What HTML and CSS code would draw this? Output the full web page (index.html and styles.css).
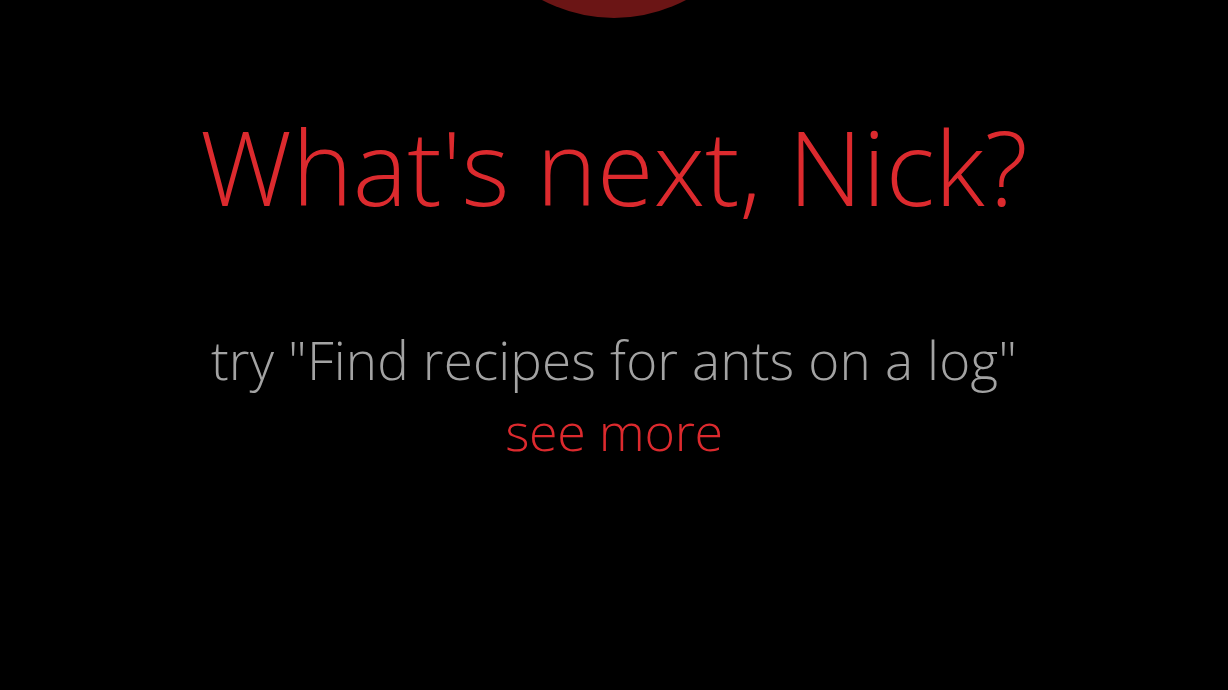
FILE: index.html
```html
<!DOCTYPE html>
<html lang="en">
<head>
<meta charset="utf-8">
<title>Cortana</title>
<link rel="stylesheet" href="styles.css">
</head>
<body>
<main class="screen">
  <div class="orb"></div>
  <h1 class="greeting">What's next, Nick?</h1>
  <div class="hints">
    <p class="hint">try "Find recipes for ants on a log"</p>
    <p class="more">see more</p>
  </div>
</main>
</body>
</html>
```
FILE: styles.css
```css
html, body {
  margin: 0;
  padding: 0;
  background: #000;
  height: 100%;
  overflow: hidden;
}
.screen {
  display: flex;
  flex-direction: column;
  align-items: center;
  font-family: "Open Sans", "Noto Sans", sans-serif;
  font-weight: 300;
}
.orb {
  width: 306px;
  height: 306px;
  border-radius: 50%;
  background: #6b1515;
  margin-top: -288px;
  flex: none;
}
.greeting {
  margin: 87px 0 0;
  font-size: 103px;
  line-height: 1.2;
  font-weight: 300;
  color: #dc2a2e;
  white-space: nowrap;
}
.hints {
  margin-top: 95px;
  display: flex;
  flex-direction: column;
  align-items: center;
  font-size: 53px;
  line-height: 71px;
  font-weight: 350;
}
.hint, .more {
  margin: 0;
  white-space: nowrap;
}
.hint { color: #a3a3a3; letter-spacing: 0.15px; }
.more { color: #dc2a2e; font-size: 52px; letter-spacing: -0.3px; }
```
